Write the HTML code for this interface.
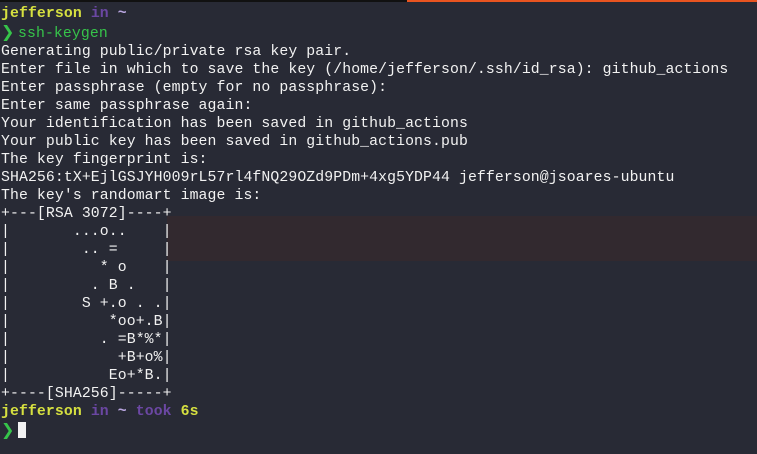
<!DOCTYPE html>
<html><head><style>
html,body{margin:0;padding:0;width:757px;height:454px;overflow:hidden;background:#282a35;}
.bar1{position:absolute;left:0;top:0;width:407px;height:2px;background:#111;}
.bar2{position:absolute;left:407px;top:0;width:350px;height:2px;background:#e95420;}
.band{position:absolute;left:167px;top:216px;width:590px;height:45px;background:#32292f;}
pre{position:absolute;left:1px;top:5px;margin:0;font-family:"Liberation Mono","DejaVu Sans Mono",monospace;font-size:14.8px;letter-spacing:0.1px;line-height:18px;color:#f2f2f2;}
.y{color:#d6e040;font-weight:bold}.p{color:#6b47a3;font-weight:bold}.t{color:#b9a6e0;font-weight:bold}.g{color:#36c44a}
.ch{display:inline-block;width:17px;color:#36c44a;font-weight:bold;font-family:"DejaVu Sans",sans-serif;font-size:16px;}
.cur{display:inline-block;width:8px;height:16px;background:#f2f2f2;vertical-align:-3px;}
</style></head><body>
<div class="bar1"></div><div class="bar2"></div><div class="band"></div>
<pre><span class="y">jefferson</span> <span class="p">in</span> <span class="t">~</span>
<span class="ch">❯</span><span class="g">ssh-keygen</span>
Generating public/private rsa key pair.
Enter file in which to save the key (/home/jefferson/.ssh/id_rsa): github_actions
Enter passphrase (empty for no passphrase):
Enter same passphrase again:
Your identification has been saved in github_actions
Your public key has been saved in github_actions.pub
The key fingerprint is:
SHA256:tX+EjlGSJYH009rL57rl4fNQ29OZd9PDm+4xg5YDP44 jefferson@jsoares-ubuntu
The key's randomart image is:
+---[RSA 3072]----+
|       ...o..    |
|        .. =     |
|          * o    |
|         . B .   |
|        S +.o . .|
|           *oo+.B|
|          . =B*%*|
|            +B+o%|
|           Eo+*B.|
+----[SHA256]-----+
<span class="y">jefferson</span> <span class="p">in</span> <span class="t">~</span> <span class="p">took</span> <span class="y">6s</span>
<span class="ch">❯</span><span class="cur"></span></pre>
</body></html>
